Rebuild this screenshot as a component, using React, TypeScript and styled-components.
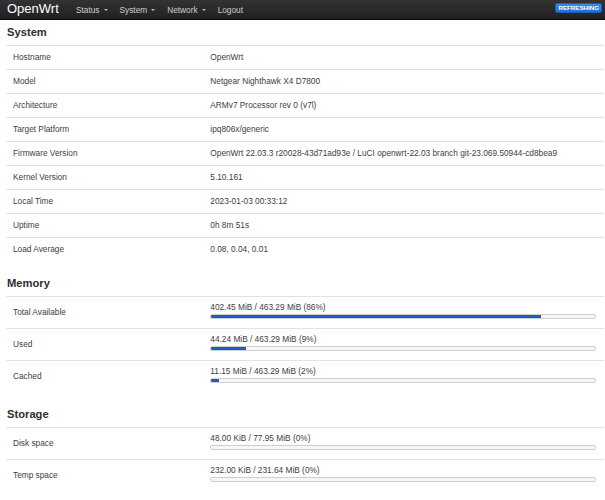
import styled, { createGlobalStyle } from "styled-components";

type InfoRow = { label: string; value: string };
type BarRow = { label: string; text: string; percent: number };

const systemRows: InfoRow[] = [
  { label: "Hostname", value: "OpenWrt" },
  { label: "Model", value: "Netgear Nighthawk X4 D7800" },
  { label: "Architecture", value: "ARMv7 Processor rev 0 (v7l)" },
  { label: "Target Platform", value: "ipq806x/generic" },
  {
    label: "Firmware Version",
    value:
      "OpenWrt 22.03.3 r20028-43d71ad93e / LuCI openwrt-22.03 branch git-23.069.50944-cd8bea9",
  },
  { label: "Kernel Version", value: "5.10.161" },
  { label: "Local Time", value: "2023-01-03 00:33:12" },
  { label: "Uptime", value: "0h 8m 51s" },
  { label: "Load Average", value: "0.08, 0.04, 0.01" },
];

const memoryRows: BarRow[] = [
  { label: "Total Available", text: "402.45 MiB / 463.29 MiB (86%)", percent: 86 },
  { label: "Used", text: "44.24 MiB / 463.29 MiB (9%)", percent: 9 },
  { label: "Cached", text: "11.15 MiB / 463.29 MiB (2%)", percent: 2 },
];

const storageRows: BarRow[] = [
  { label: "Disk space", text: "48.00 KiB / 77.95 MiB (0%)", percent: 0 },
  { label: "Temp space", text: "232.00 KiB / 231.64 MiB (0%)", percent: 0 },
];

const BarTable = ({ rows }: { rows: BarRow[] }) => (
  <>
    {rows.map((row) => (
      <BarRowWrap key={row.label}>
        <Label>{row.label}</Label>
        <BarCell>
          <BarText>{row.text}</BarText>
          <Progress>
            <ProgressFill style={{ width: `${row.percent}%` }} />
          </Progress>
        </BarCell>
      </BarRowWrap>
    ))}
  </>
);

const App = () => {
  return (
    <>
      <GlobalStyle />
      <Header>
        <Brand>OpenWrt</Brand>
        <Nav>
          <NavItem $dropdown>Status</NavItem>
          <NavItem $dropdown>System</NavItem>
          <NavItem $dropdown>Network</NavItem>
          <NavItem>Logout</NavItem>
        </Nav>
        <Badge>Refreshing</Badge>
      </Header>

      <Main>
        <Section>
          <Heading>System</Heading>
          {systemRows.map((row) => (
            <Row key={row.label}>
              <Label>{row.label}</Label>
              <Value>{row.value}</Value>
            </Row>
          ))}
        </Section>

        <Section>
          <Heading>Memory</Heading>
          <BarTable rows={memoryRows} />
        </Section>

        <Section>
          <Heading>Storage</Heading>
          <BarTable rows={storageRows} />
        </Section>
      </Main>
    </>
  );
};

export default App;

// ===== styles =====

const GlobalStyle = createGlobalStyle`
  html, body {
    margin: 0;
    padding: 0;
    background: #fff;
    font-family: "Liberation Sans", Arial, sans-serif;
    color: #404040;
  }
`;

const Header = styled.div`
  height: 19px;
  display: flex;
  align-items: center;
  padding: 0 3px 0 7px;
  background: linear-gradient(#333333, #202020);
  border-bottom: 1px solid #0a0a0a;
`;

const Brand = styled.div`
  color: #ffffff;
  font-size: 13px;
  line-height: 19px;
  margin-top: -3px;
  width: 64px;
`;

const Nav = styled.div`
  display: flex;
  align-items: center;
  flex: 1;
`;

const NavItem = styled.div<{ $dropdown?: boolean }>`
  color: #cfcfcf;
  font-size: 8.3px;
  padding: 0 5px;
  margin-right: 2px;
  display: flex;
  align-items: center;

  &::after {
    content: "";
    display: ${(p) => (p.$dropdown ? "block" : "none")};
    margin-left: 4px;
    margin-top: 1px;
    border-left: 2.5px solid transparent;
    border-right: 2.5px solid transparent;
    border-top: 2.5px solid #bdbdbd;
  }
`;

const Badge = styled.div`
  background: linear-gradient(#3b8ae6, #1f6fd6);
  border: 1px solid #1a60bb;
  border-radius: 2px;
  color: #ffffff;
  font-size: 6.2px;
  font-weight: bold;
  text-transform: uppercase;
  line-height: 8px;
  padding: 0 2px;
  margin-top: -4px;
`;

const Main = styled.div`
  padding: 5px 1px 0 6px;
`;

const Section = styled.div`
  & + & {
    margin-top: 15px;
  }
`;

const Heading = styled.div`
  font-size: 11.2px;
  font-weight: bold;
  color: #2e2e2e;
  line-height: 14px;
  padding: 0 0 6px 1px;
`;

const Row = styled.div`
  display: grid;
  grid-template-columns: 33% 67%;
  height: 24px;
  align-items: center;
  border-top: 1px solid #e2e2e2;
  box-sizing: border-box;
  padding-bottom: 2px;
`;

const Label = styled.div`
  padding-left: 7px;
  color: #404040;
  font-size: 8.3px;
`;

const Value = styled.div`
  padding-left: 7px;
  color: #404040;
  font-size: 8.3px;
  white-space: nowrap;
`;

const BarRowWrap = styled.div`
  display: grid;
  grid-template-columns: 33% 67%;
  height: 32px;
  align-items: center;
  border-top: 1px solid #e2e2e2;
  box-sizing: border-box;
  padding-bottom: 2px;
`;

const BarCell = styled.div`
  padding: 0 8px 0 7px;
  display: flex;
  flex-direction: column;
  gap: 2px;
  margin-top: -3px;
`;

const BarText = styled.div`
  font-size: 8.3px;
  color: #404040;
  line-height: 10px;
`;

const Progress = styled.div`
  height: 5px;
  box-sizing: border-box;
  border: 1px solid #cfcfcf;
  border-radius: 2px;
  background: #f7f7f7;
  overflow: hidden;
  display: flex;
`;

const ProgressFill = styled.div`
  height: 100%;
  background: #1a5fbf;
`;
